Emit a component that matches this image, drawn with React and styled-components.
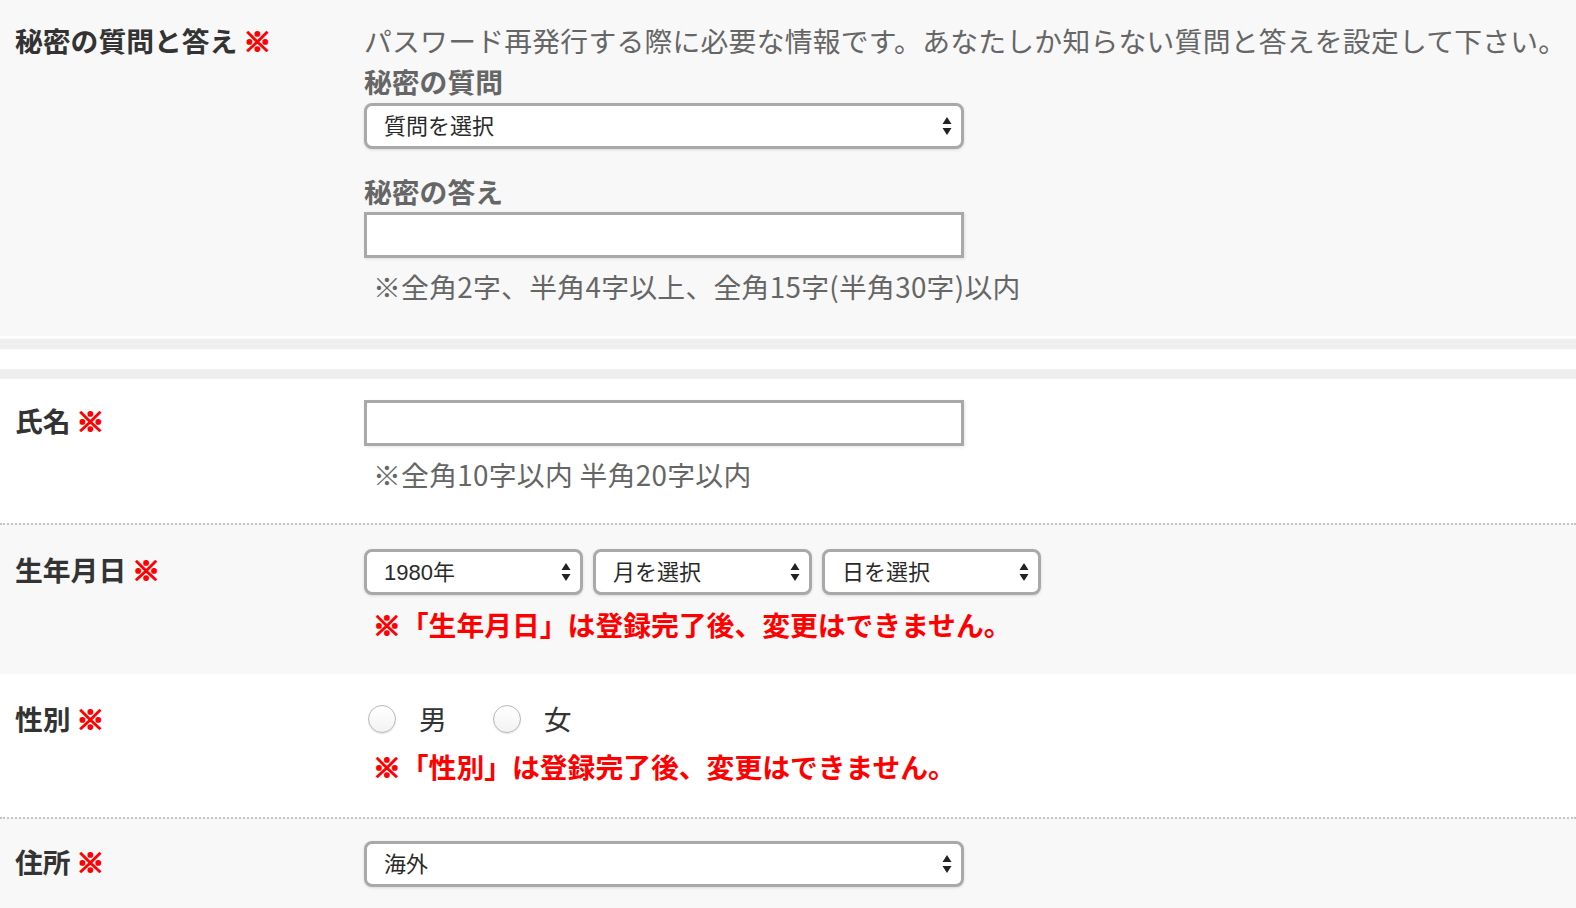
import React from "react";
import styled, { createGlobalStyle } from "styled-components";

const GlobalStyle = createGlobalStyle`
  html, body { margin: 0; padding: 0; background: #fff; }
  body {
    font-family: "Noto Sans CJK JP", "Noto Sans", sans-serif;
    color: #333;
  }
  * { box-sizing: border-box; }
`;

const FS = "27.8px";

const Page = styled.div`
  width: 1576px;
`;

const Section = styled.section`
  display: grid;
  grid-template-columns: 364px 1fr;
  align-items: start;
  background: ${(p) => p.$bg || "#fff"};
  padding: ${(p) => p.$pt}px 0 ${(p) => p.$pb}px;
  border-top: ${(p) => (p.$dotted ? "2px dotted #c4c4c4" : "none")};
`;

const Label = styled.div`
  padding-left: 15px;
  font-size: ${FS};
  line-height: 41px;
  font-weight: 700;
  color: #333;
  white-space: nowrap;
`;

const Req = styled.span`
  color: #f00;
  margin-left: 6px;
  font-weight: 900;
  -webkit-text-stroke: 1.6px #f00;
`;

const Content = styled.div`
  display: flex;
  flex-direction: column;
  align-items: flex-start;
`;

const Desc = styled.p`
  margin: 0;
  font-size: ${FS};
  line-height: 41px;
  letter-spacing: 0.25px;
  color: #666;
  white-space: nowrap;
`;

const SubLabel = styled.h4`
  margin: ${(p) => p.$mt || 0}px 0 0;
  font-size: ${FS};
  line-height: 41px;
  font-weight: 700;
  color: #666;
`;

const Note = styled.p`
  margin: ${(p) => p.$mt || 8}px 0 0;
  padding-left: 9px;
  font-size: ${FS};
  line-height: 41px;
  letter-spacing: ${(p) => (p.$red ? "0" : "0.3px")};
  color: ${(p) => (p.$red ? "#f00" : "#666")};
  font-weight: ${(p) => (p.$red ? 700 : 400)};
  white-space: nowrap;
`;

const RedMark = styled.span`
  font-weight: 900;
  -webkit-text-stroke: 1.6px #f00;
`;

const SelectWrap = styled.div`
  position: relative;
  width: ${(p) => p.$w}px;
  margin-top: ${(p) => p.$mt || 0}px;
`;

const SelectBox = styled.select`
  appearance: none;
  -webkit-appearance: none;
  display: block;
  width: 100%;
  height: 46px;
  padding: 0 40px 0 17px;
  border: 3px solid #a9a9a9;
  border-radius: 8px;
  background: #fff;
  box-shadow: 0 1px 3px rgba(0, 0, 0, 0.12);
  font-family: "Liberation Sans", "Noto Sans CJK JP", sans-serif;
  font-size: 22px;
  color: #2a2a2a;
  outline: none;
`;

const Arrows = styled.span`
  position: absolute;
  right: 12px;
  top: 50%;
  transform: translateY(-50%);
  display: flex;
  pointer-events: none;
`;

const TextInput = styled.input`
  display: block;
  width: 600px;
  height: 46px;
  margin-top: ${(p) => p.$mt || 0}px;
  border: 3px solid #a9a9a9;
  border-radius: 0;
  background: #fff;
  box-shadow: 1px 1px 3px rgba(0, 0, 0, 0.1);
  outline: none;
`;

const DateRow = styled.div`
  display: flex;
  gap: 10px;
`;

const RadioGroup = styled.div`
  display: flex;
  align-items: center;
  gap: 46px;
  height: 41px;
  padding-left: 4px;
`;

const RadioOption = styled.label`
  display: flex;
  align-items: center;
  gap: 23px;
  font-size: ${FS};
  line-height: 41px;
  color: #333;
`;

const RadioInput = styled.input`
  appearance: none;
  -webkit-appearance: none;
  margin: 0;
  width: 28px;
  height: 28px;
  border-radius: 50%;
  border: 1.5px solid #b8b8b8;
  background: linear-gradient(#fff, #f3f3f3);
  box-shadow: 0 1px 1px rgba(0, 0, 0, 0.12);
`;

const Spacer = styled.div`
  margin-top: 3px;
  height: 40px;
  border-top: 10px solid #eee;
  border-bottom: 10px solid #eee;
  background: #fff;
`;

function ArrowIcon() {
  return (
    <svg width="10" height="20" viewBox="0 0 10 20">
      <path d="M5 1 L9.5 8 L0.5 8 Z" fill="#222" />
      <path d="M0.5 12 L9.5 12 L5 19 Z" fill="#222" />
    </svg>
  );
}

function Select({ width, mt, children }) {
  return (
    <SelectWrap $w={width} $mt={mt}>
      <SelectBox defaultValue="">{children}</SelectBox>
      <Arrows>
        <ArrowIcon />
      </Arrows>
    </SelectWrap>
  );
}

export default function App() {
  return (
    <Page>
      <GlobalStyle />
      <Section $bg="#f8f8f8" $pt={20} $pb={29}>
        <Label>
          秘密の質問と答え<Req>※</Req>
        </Label>
        <Content>
          <Desc>
            パスワード再発行する際に必要な情報です。あなたしか知らない質問と答えを設定して下さい。
          </Desc>
          <SubLabel>秘密の質問</SubLabel>
          <Select width={600} mt={1}>
            <option value="">質問を選択</option>
          </Select>
          <SubLabel $mt={22}>秘密の答え</SubLabel>
          <TextInput type="text" />
          <Note>※全角2字、半角4字以上、全角15字(半角30字)以内</Note>
        </Content>
      </Section>
      <Spacer />
      <Section $pt={21} $pb={28}>
        <Label>
          氏名<Req>※</Req>
        </Label>
        <Content>
          <TextInput type="text" />
          <Note>※全角10字以内 半角20字以内</Note>
        </Content>
      </Section>
      <Section $bg="#f8f8f8" $dotted $pt={24} $pb={29}>
        <Label>
          生年月日<Req>※</Req>
        </Label>
        <Content>
          <DateRow>
            <Select width={219}>
              <option value="">1980年</option>
            </Select>
            <Select width={219}>
              <option value="">月を選択</option>
            </Select>
            <Select width={219}>
              <option value="">日を選択</option>
            </Select>
          </DateRow>
          <Note $red $mt={9}>
            <RedMark>※</RedMark>「生年月日」は登録完了後、変更はできません。
          </Note>
        </Content>
      </Section>
      <Section $pt={24} $pb={30}>
        <Label>
          性別<Req>※</Req>
        </Label>
        <Content>
          <RadioGroup>
            <RadioOption>
              <RadioInput type="radio" name="sex" />男
            </RadioOption>
            <RadioOption>
              <RadioInput type="radio" name="sex" />女
            </RadioOption>
          </RadioGroup>
          <Note $red $mt={7}>
            <RedMark>※</RedMark>「性別」は登録完了後、変更はできません。
          </Note>
        </Content>
      </Section>
      <Section $bg="#f8f8f8" $dotted $pt={22} $pb={30}>
        <Label>
          住所<Req>※</Req>
        </Label>
        <Content>
          <Select width={600}>
            <option value="">海外</option>
          </Select>
        </Content>
      </Section>
    </Page>
  );
}
